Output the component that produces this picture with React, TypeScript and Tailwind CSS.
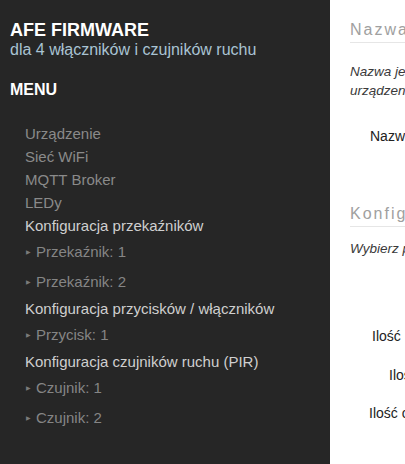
import React from "react";

const font = { fontFamily: '"Liberation Sans", Arial, sans-serif' };

function Item({ children }: { children: React.ReactNode }) {
  return <div className="h-[23px] leading-[23px] text-[15px] text-[#8a8a8a] pl-[25px] whitespace-nowrap">{children}</div>;
}
function Header({ children }: { children: React.ReactNode }) {
  return <div className="h-[23px] leading-[23px] text-[15px] text-[#cfcfcf] pl-[25px] whitespace-nowrap">{children}</div>;
}
function Sub({ children }: { children: React.ReactNode }) {
  return (
    <div className="h-[30px] leading-[30px] text-[15px] text-[#858585] pl-[26px] flex items-center whitespace-nowrap">
      <span className="text-[6px] text-[#7a7a7a] w-[10px] leading-none">▶</span>
      <span>{children}</span>
    </div>
  );
}

export default function App() {
  return (
    <div className="flex w-[405px] h-[464px] overflow-hidden" style={font}>
      <div className="w-[330px] shrink-0 bg-[#262626] pt-[20px]">
        <div className="pl-[10px] text-[18px] leading-[20px] font-bold text-white">AFE FIRMWARE</div>
        <div className="pl-[10px] text-[16px] leading-[20px] text-[#a9c3d3]">dla 4 włączników i czujników ruchu</div>
        <div className="pl-[10px] mt-[20px] text-[16px] leading-[20px] font-bold text-white">MENU</div>
        <div className="mt-[22px]">
          <Item>Urządzenie</Item>
          <Item>Sieć WiFi</Item>
          <Item>MQTT Broker</Item>
          <Item>LEDy</Item>
          <Header>Konfiguracja przekaźników</Header>
          <Sub>Przekaźnik: 1</Sub>
          <Sub>Przekaźnik: 2</Sub>
          <Header>Konfiguracja przycisków / włączników</Header>
          <Sub>Przycisk: 1</Sub>
          <Header>Konfiguracja czujników ruchu (PIR)</Header>
          <Sub>Czujnik: 1</Sub>
          <Sub>Czujnik: 2</Sub>
        </div>
      </div>
      <div className="flex-1 bg-white overflow-hidden pl-[20px] pt-[20px] whitespace-nowrap">
        <div className="text-[16px] leading-[20px] tracking-[2px] text-[#a0a0a0] pb-[2px] border-b border-[#e6e6e6] w-[400px]">Nazwa urządzenia</div>
        <div className="mt-[19px] text-[13.5px] leading-[19px] italic text-[#3a3a3a]">Nazwa jest wykorzystywana do identyfikacji</div>
        <div className="text-[13.5px] leading-[19px] italic text-[#3a3a3a]">urządzenia w sieci</div>
        <div className="mt-[28px] pl-[20px] text-[14px] leading-[16px] text-[#222]">Nazwa</div>
        <div className="mt-[60px] text-[16px] leading-[20px] tracking-[2px] text-[#a0a0a0] pb-[2px] border-b border-[#e6e6e6] w-[400px]">Konfiguracja urządzenia</div>
        <div className="mt-[13px] text-[13.5px] leading-[18px] italic text-[#3a3a3a]">Wybierz podłączone elementy</div>
        <div className="mt-[70px] pl-[22px] text-[14px] leading-[16px] text-[#222]">Ilość przekaźników</div>
        <div className="mt-[23px] pl-[39px] text-[14px] leading-[16px] text-[#222]">Ilość LED</div>
        <div className="mt-[22px] pl-[19px] text-[14px] leading-[16px] text-[#222]">Ilość czujników</div>
      </div>
    </div>
  );
}
